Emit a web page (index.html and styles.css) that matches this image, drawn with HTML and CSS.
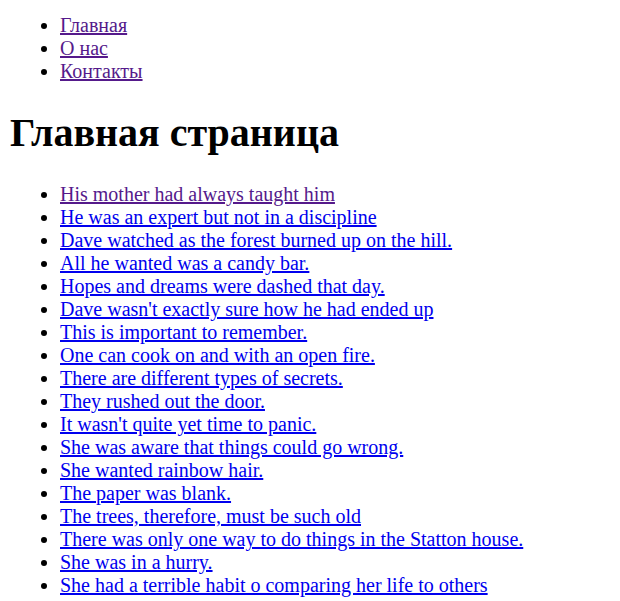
FILE: index.html
```html
<!DOCTYPE html>
<html lang="ru">
<head>
<meta charset="utf-8">
<title>Главная страница</title>
<link rel="stylesheet" href="styles.css">
</head>
<body>
<nav class="nav">
  <ul class="list nav-list">
    <li><a class="link visited" href="#">Главная</a></li>
    <li><a class="link visited" href="#">О нас</a></li>
    <li><a class="link visited" href="#">Контакты</a></li>
  </ul>
</nav>
<main class="main">
  <h1 class="title">Главная страница</h1>
  <ul class="list">
    <li><a class="link visited" href="#">His mother had always taught him</a></li>
    <li><a class="link" href="#">He was an expert but not in a discipline</a></li>
    <li><a class="link" href="#">Dave watched as the forest burned up on the hill.</a></li>
    <li><a class="link" href="#">All he wanted was a candy bar.</a></li>
    <li><a class="link" href="#">Hopes and dreams were dashed that day.</a></li>
    <li><a class="link" href="#">Dave wasn't exactly sure how he had ended up</a></li>
    <li><a class="link" href="#">This is important to remember.</a></li>
    <li><a class="link" href="#">One can cook on and with an open fire.</a></li>
    <li><a class="link" href="#">There are different types of secrets.</a></li>
    <li><a class="link" href="#">They rushed out the door.</a></li>
    <li><a class="link" href="#">It wasn't quite yet time to panic.</a></li>
    <li><a class="link" href="#">She was aware that things could go wrong.</a></li>
    <li><a class="link" href="#">She wanted rainbow hair.</a></li>
    <li><a class="link" href="#">The paper was blank.</a></li>
    <li><a class="link" href="#">The trees, therefore, must be such old</a></li>
    <li><a class="link" href="#">There was only one way to do things in the Statton house.</a></li>
    <li><a class="link" href="#">She was in a hurry.</a></li>
    <li><a class="link" href="#">She had a terrible habit o comparing her life to others</a></li>
  </ul>
</main>
</body>
</html>
```
FILE: styles.css
```css
html {
  background: #fff;
}
body {
  margin: 0 10px;
  padding-top: 13.5px;
  font-family: "Liberation Serif", "Times New Roman", serif;
  font-size: 20px;
  color: #000;
}
.list {
  margin: 0;
  padding-left: 50px;
  list-style: disc outside;
}
.nav-list {
  margin: 0;
}
.title {
  font-size: 40px;
  font-weight: bold;
  margin: 26.8px 0;
}
.link {
  color: #0000ee;
  text-decoration: underline;
}
.link.visited {
  color: #551a8b;
}
```
